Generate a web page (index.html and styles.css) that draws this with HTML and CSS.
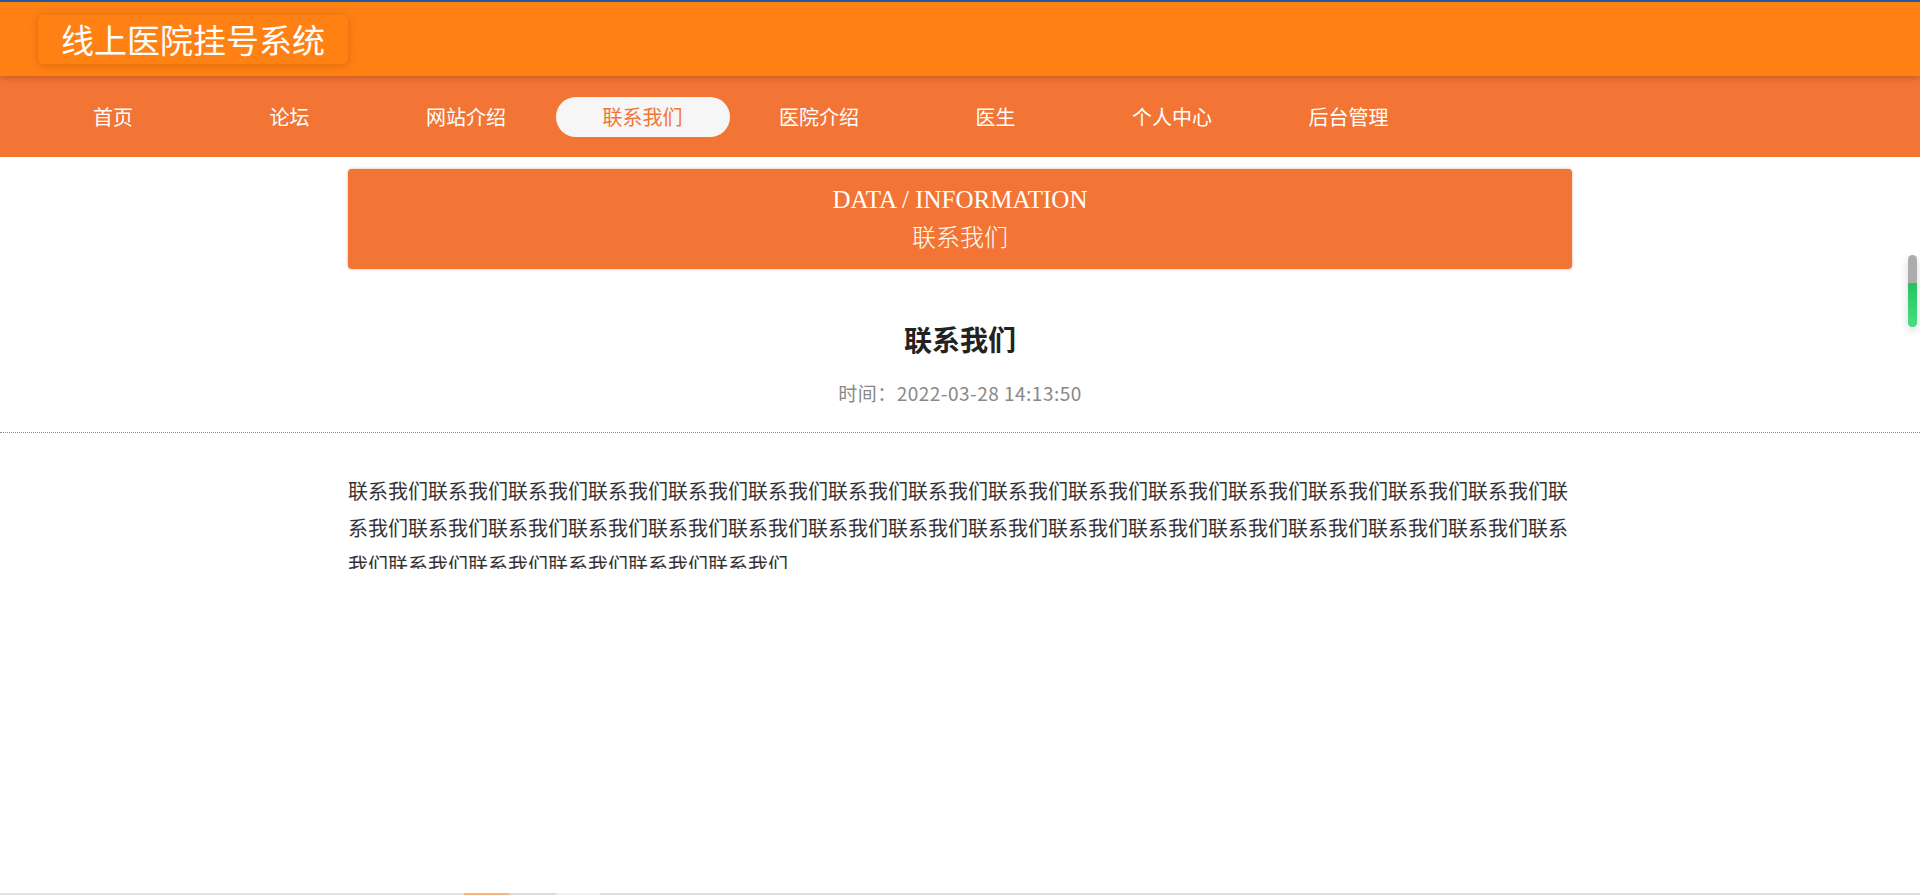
FILE: index.html
```html
<!DOCTYPE html>
<html lang="zh-CN">
<head>
    <meta charset="UTF-8">
    <meta name="viewport" content="width=device-width, initial-scale=1.0">
    <title>联系我们 - 线上医院挂号系统</title>
    <link rel="stylesheet" href="styles.css">
</head>
<body>
    <!-- Header -->
    <header class="site-header">
        <div class="site-title">线上医院挂号系统</div>
    </header>

    <!-- Menu -->
    <nav class="menu">
        <a class="menu-item" href="#">首页</a>
        <a class="menu-item" href="#">论坛</a>
        <a class="menu-item" href="#">网站介绍</a>
        <a class="menu-item active" href="#">联系我们</a>
        <a class="menu-item" href="#">医院介绍</a>
        <a class="menu-item" href="#">医生</a>
        <a class="menu-item" href="#">个人中心</a>
        <a class="menu-item" href="#">后台管理</a>
    </nav>

    <div class="banner">
        <div class="banner-en">DATA / INFORMATION</div>
        <div class="banner-cn">联系我们</div>
    </div>

    <div class="detail-head">
        <h1 class="detail-title">联系我们</h1>
        <div class="detail-time">时间：2022-03-28 14:13:50</div>
    </div>

    <div class="detail-content">联系我们联系我们联系我们联系我们联系我们联系我们联系我们联系我们联系我们联系我们联系我们联系我们联系我们联系我们联系我们联系我们联系我们联系我们联系我们联系我们联系我们联系我们联系我们联系我们联系我们联系我们联系我们联系我们联系我们联系我们联系我们联系我们联系我们联系我们联系我们联系我们</div>

    <!-- Side scroll indicator -->
    <div class="scroll-bar">
        <div class="scroll-fill"></div>
    </div>

    <div class="bottom-strip">
        <span class="seg seg-a"></span>
        <span class="seg seg-b"></span>
        <span class="seg seg-c"></span>
        <span class="seg seg-d"></span>
        <span class="seg seg-e"></span>
    </div>
</body>
</html>
```

FILE: styles.css
```css
:root {
    --header-orange: #ff8114;
    --menu-orange: #f37535;
    --text-dark: #333;
}

body {
    margin: 0;
    font-family: "Noto Sans CJK SC", "Noto Sans", sans-serif;
    background: #fff;
    color: var(--text-dark);
}

.site-header {
    position: relative;
    z-index: 2;
    height: 74px;
    border-top: 2px solid #1f5b9c;
    background: var(--header-orange);
    display: flex;
    align-items: center;
    padding-left: 38px;
    box-shadow: 0 2px 6px rgba(120, 50, 0, 0.35);
}

.site-title {
    height: 49px;
    line-height: 49px;
    padding: 0 23px;
    font-size: 33px;
    color: #fff;
    background: var(--header-orange);
    border-radius: 6px;
    box-shadow: 0 1px 8px rgba(150, 60, 0, 0.35);
}

.menu {
    height: 81px;
    background: var(--menu-orange);
    display: flex;
    align-items: center;
    gap: 2.5px;
    padding-left: 26px;
}

.menu-item {
    width: 174px;
    height: 40px;
    line-height: 40px;
    text-align: center;
    font-size: 20px;
    color: #fff;
    text-decoration: none;
    border-radius: 20px;
}

.menu-item.active {
    background: #f6f6f6;
    color: var(--menu-orange);
}

.banner {
    width: 1224px;
    margin: 12px auto 0;
    padding: 12px 0;
    box-sizing: border-box;
    height: 100px;
    background: var(--menu-orange);
    border-radius: 4px;
    box-shadow: 0 0 3px rgba(160, 90, 50, 0.45);
    text-align: center;
    color: #fff;
    line-height: 38px;
    font-size: 25px;
}

.banner-en {
    font-family: "Liberation Serif", serif;
}

.banner-cn {
    font-family: "Liberation Serif", "Noto Sans CJK SC", serif;
    font-size: 24px;
    font-weight: 300;
}

.detail-head {
    padding: 50px 0 24px;
    text-align: center;
    border-bottom: 1px dotted #8a8a8a;
}

.detail-title {
    margin: 0;
    font-size: 28px;
    line-height: 40px;
    font-weight: bold;
    color: #222;
}

.detail-time {
    margin-top: 19px;
    font-size: 19px;
    letter-spacing: 0.5px;
    line-height: 30px;
    color: #888;
}

.detail-content {
    width: 1224px;
    margin: 39px auto 0;
    height: 97px;
    overflow: hidden;
    font-size: 20px;
    line-height: 37px;
    color: var(--text-dark);
    word-break: break-all;
}

/* fixed widgets */
.scroll-bar {
    position: fixed;
    top: 255px;
    right: 3px;
    width: 9px;
    height: 72px;
    border-radius: 5px;
    background: #acacac;
    overflow: hidden;
    display: flex;
    flex-direction: column;
    justify-content: flex-end;
    box-shadow: 0 4px 10px rgba(0, 0, 0, 0.15);
}

.scroll-fill {
    height: 44px;
    background: linear-gradient(to bottom, #22c55e, #4ade80);
}

.bottom-strip {
    position: fixed;
    left: 0;
    right: 0;
    bottom: 0;
    height: 2px;
    display: flex;
    background: #e3ded8;
}

.seg { display: block; height: 100%; }
.seg-a { width: 464px; background: #dce3ea; }
.seg-b { width: 45px; background: #f8b47c; }
.seg-c { width: 47px; background: #dcdcdc; }
.seg-d { width: 44px; background: #f0f0f0; }
.seg-e { flex: 1; background: #e3ded8; }
```
